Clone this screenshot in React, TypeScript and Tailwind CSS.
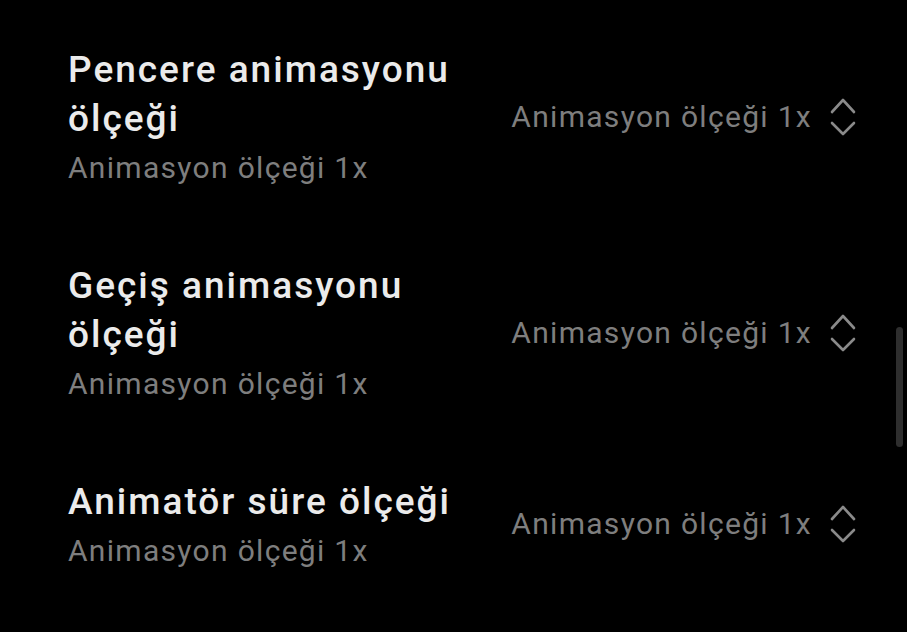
import React from 'react';

interface Setting {
  title: string;
  summary: string;
  value: string;
}

const settings: Setting[] = [
  { title: 'Pencere animasyonu ölçeği', summary: 'Animasyon ölçeği 1x', value: 'Animasyon ölçeği 1x' },
  { title: 'Geçiş animasyonu ölçeği', summary: 'Animasyon ölçeği 1x', value: 'Animasyon ölçeği 1x' },
  { title: 'Animatör süre ölçeği', summary: 'Animasyon ölçeği 1x', value: 'Animasyon ölçeği 1x' },
];

function UpDown() {
  return (
    <svg width="28" height="40" viewBox="0 0 28 40" fill="none" stroke="#8a8a8a" strokeWidth="2.6" strokeLinecap="round" strokeLinejoin="round">
      <path d="M3 15 L14 3 L25 15" />
      <path d="M3 26 L14 37 L25 26" />
    </svg>
  );
}

export default function App() {
  return (
    <div
      className="relative w-[907px] h-[632px] overflow-hidden bg-black"
      style={{ fontFamily: 'Roboto, "Noto Sans", sans-serif' }}
    >
      <div className="pt-[11px]">
        {settings.map((s) => (
          <div key={s.title} className="flex items-center justify-between py-[34px] pl-[68px] pr-[50px]">
            <div className="w-[410px]">
              <p className="text-[37px] leading-[49px] font-medium tracking-[2px] text-[#ebebeb]">{s.title}</p>
              <p className="text-[30px] leading-[50px] tracking-[1.3px] text-[#7e7e7e]">{s.summary}</p>
            </div>
            <div className="flex items-center gap-[17px] mb-[5px]">
              <span className="text-[30px] leading-[40px] tracking-[1.3px] text-[#7e7e7e]">{s.value}</span>
              <UpDown />
            </div>
          </div>
        ))}
      </div>
      <div className="absolute right-[4px] top-[327px] w-[7px] h-[120px] rounded-full bg-[#2e2e2e]" />
    </div>
  );
}
